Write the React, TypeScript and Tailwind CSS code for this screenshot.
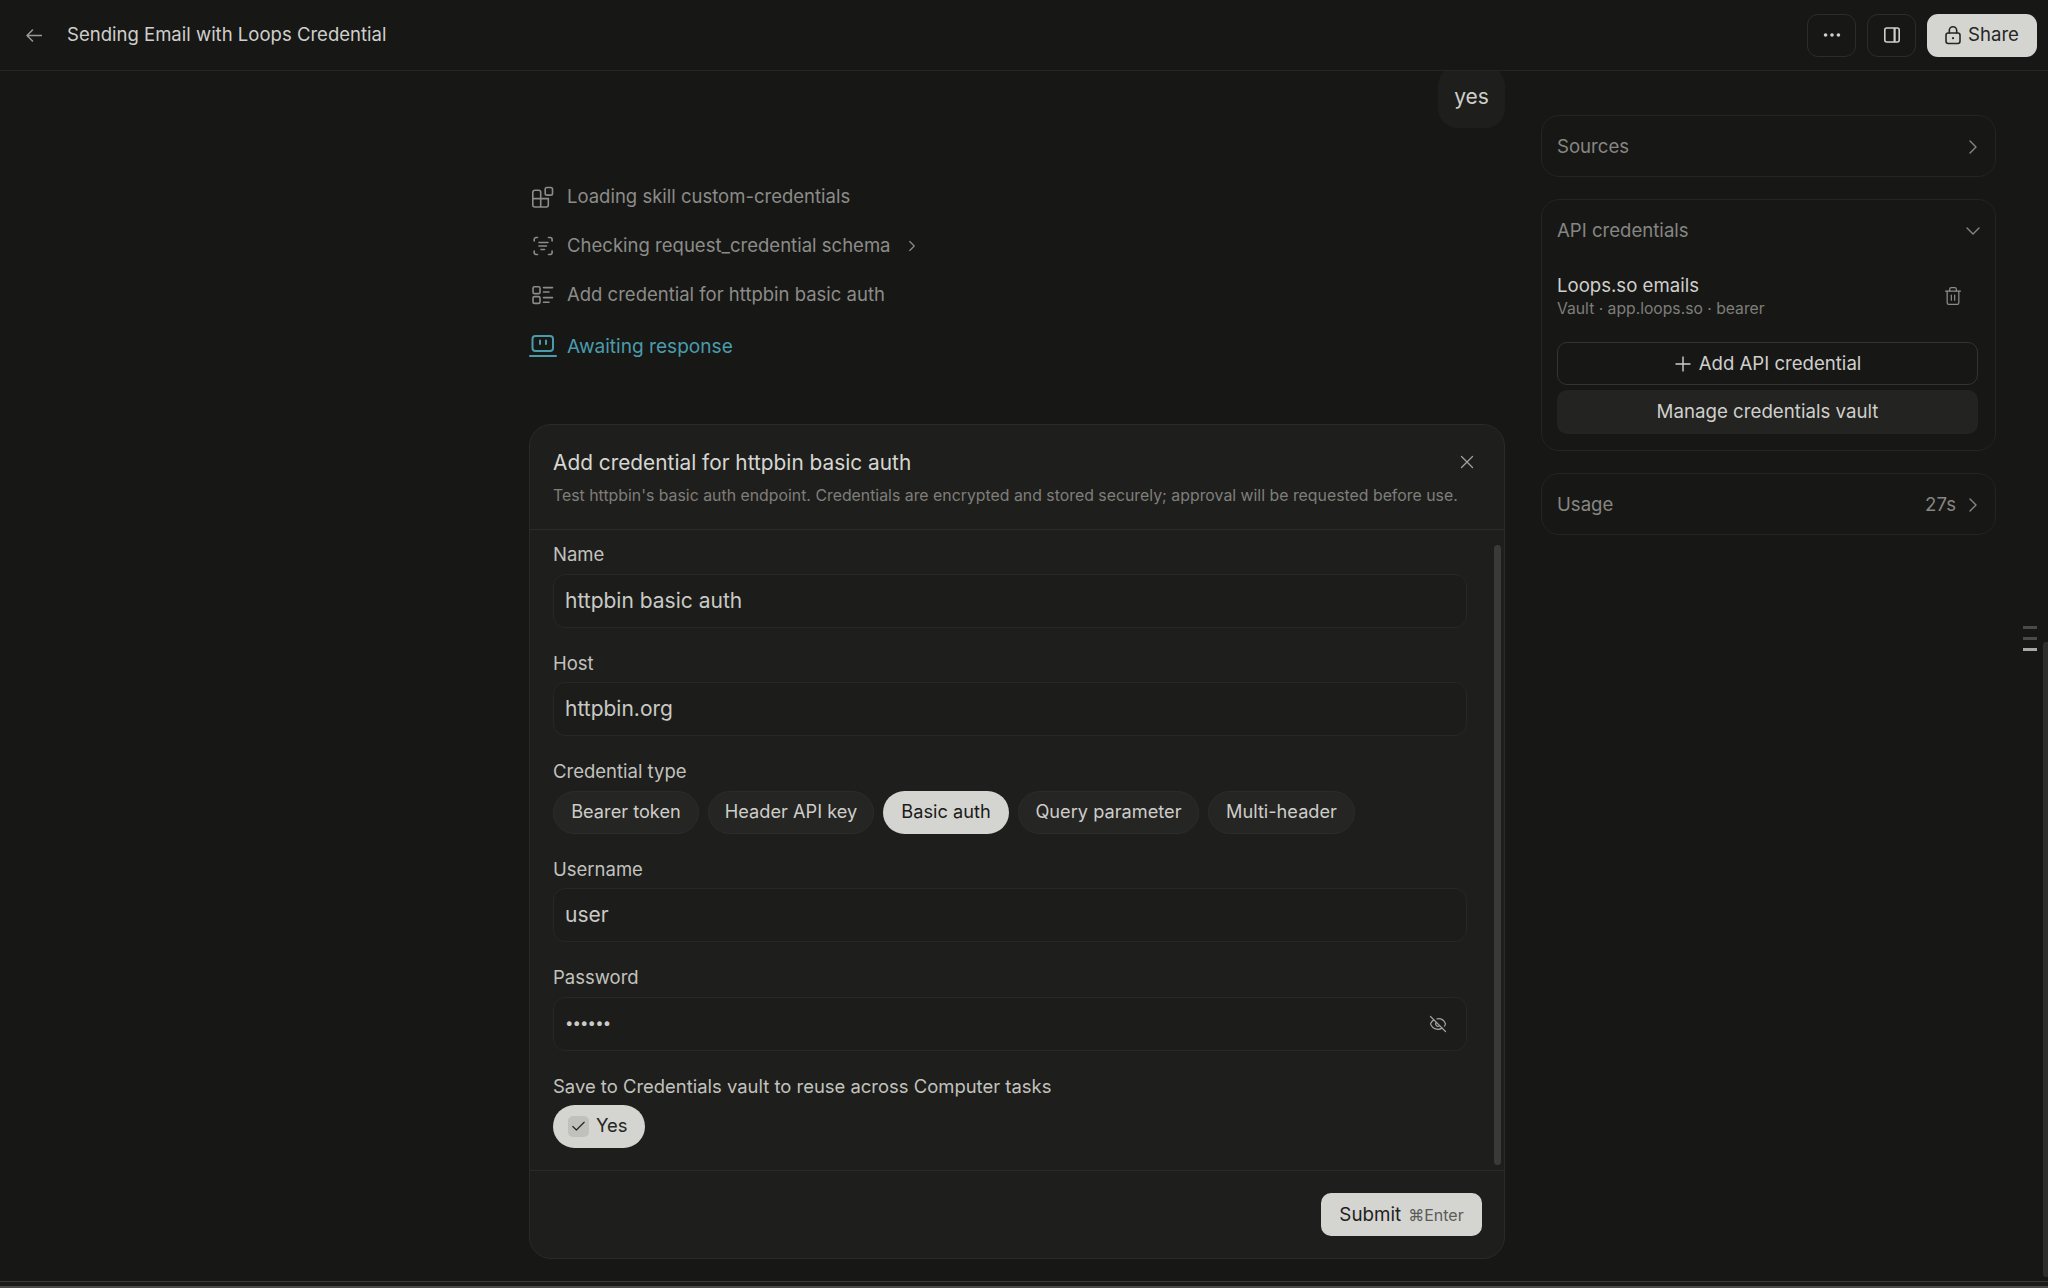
import React from "react";
import { ChevronRight, ChevronDown, Ellipsis, Trash2, Plus, X, EyeOff, Check } from "lucide-react";

const FONT = "font-['Inter','Liberation_Sans',sans-serif]";

function BackIcon() {
  return (
    <svg viewBox="0 0 16 13" className="w-[16px] h-[13px] text-[#9a9a96]" fill="none" stroke="currentColor" strokeWidth="1.5" strokeLinecap="round" strokeLinejoin="round">
      <path d="M6.5 1 1 6.5 6.5 12M1 6.5h14.5" />
    </svg>
  );
}
function LockIcon() {
  return (
    <svg viewBox="0 0 20 20" className="w-[20px] h-[20px]" fill="none" stroke="currentColor" strokeWidth="1.6" strokeLinecap="round">
      <rect x="3" y="8" width="14" height="10.5" rx="2.2" />
      <path d="M6.3 8V5.4a3.7 3.7 0 0 1 7.4 0V8" />
      <circle cx="10" cy="13.2" r="1.1" fill="currentColor" stroke="none" />
    </svg>
  );
}
function SkillIcon() {
  return (
    <svg viewBox="0 0 24 24" className="w-[24px] h-[24px]" fill="none" stroke="currentColor" strokeWidth="1.6">
      <path d="M1.8 7.3a2 2 0 0 1 2-2h3.9a2 2 0 0 1 2 2v6.3h7.6V20a2 2 0 0 1-2 2H3.8a2 2 0 0 1-2-2z" />
      <path d="M1.8 13.6h7.9M9.7 13.6V22" />
      <rect x="14.2" y="2.5" width="7.3" height="7.6" rx="1.7" />
    </svg>
  );
}
function ScanIcon() {
  return (
    <svg viewBox="0 0 24 24" className="w-[24px] h-[24px]" fill="none" stroke="currentColor" strokeWidth="1.6" strokeLinecap="round">
      <path d="M6.5 3.5H5.2a2 2 0 0 0-2 2V7M17.5 3.5h1.6a2 2 0 0 1 2 2V7M6.5 20.5H5.2a2 2 0 0 1-2-2V17M17.5 20.5h1.6a2 2 0 0 0 2-2V17" />
      <path d="M8 8.5h9M8 12h7.5M10 15.5h3.5" />
    </svg>
  );
}
function ListIcon() {
  return (
    <svg viewBox="0 0 24 24" className="w-[24px] h-[24px]" fill="none" stroke="currentColor" strokeWidth="1.6" strokeLinecap="round">
      <rect x="2" y="3.8" width="7" height="6.8" rx="1.4" />
      <rect x="2" y="13.6" width="7" height="6.8" rx="1.4" />
      <path d="M12.5 4.6h9M12.5 9h5.5M12.5 14.6h9M12.5 19.2h5.5" />
    </svg>
  );
}
function AwaitIcon() {
  return (
    <svg viewBox="0 0 28 24" className="w-[28px] h-[24px]" fill="none" stroke="currentColor" strokeWidth="2" strokeLinecap="round">
      <rect x="3.5" y="2" width="20.5" height="15" rx="3" />
      <path d="M1 22h26" />
      <path d="M11 6.5v3.5M17 6.5v3.5" />
    </svg>
  );
}
function PanelIcon() {
  return (
    <svg viewBox="0 0 20 20" className="w-[20px] h-[20px]" fill="none" stroke="currentColor" strokeWidth="1.6">
      <rect x="2.8" y="3" width="14.4" height="14" rx="2" />
      <path d="M12.6 3v14" strokeWidth="2.2" />
    </svg>
  );
}

function Step({ icon, label, size, chevron, teal }: { icon: React.ReactNode; label: string; size: string; chevron?: boolean; teal?: boolean }) {
  return (
    <div className={`flex items-center h-[24px] ${teal ? "text-[#4b9cab]" : "text-[#8c8c88]"}`}>
      <div className={teal ? "w-[38px] flex" : "w-[36px] flex"}>{icon}</div>
      <span className={size}>{label}</span>
      {chevron && <ChevronRight className="ml-[12px] w-[18px] h-[18px]" strokeWidth={1.6} />}
    </div>
  );
}

function Field({ label, value, dots, children }: { label: string; value: string; dots?: boolean; children?: React.ReactNode }) {
  return (
    <div className="flex flex-col">
      <div className="text-[18.5px] leading-[24px] text-[#c2c2be]">{label}</div>
      <div className="mt-[7.5px] h-[54px] rounded-[12px] border border-[#272725] bg-[#1c1c1a] flex items-center pl-[11px] pr-[19px] justify-between">
        <span className={dots ? "text-[15px] tracking-[-0.9px] text-[#c9c9c5]" : "text-[21px] text-[#c9c9c5]"}>{value}</span>
        {children}
      </div>
    </div>
  );
}

function Pill({ label, width, active }: { label: string; width: string; active?: boolean }) {
  return (
    <div className={`${width} h-[43px] rounded-full flex items-center justify-center text-[18.2px] ${active ? "bg-[#d4d4d1] text-[#1b1b19]" : "bg-[#252523] border border-[#2c2c2a] text-[#cdcdc9]"}`}>
      {label}
    </div>
  );
}

function SideCard({ children }: { children: React.ReactNode }) {
  return <div className="rounded-[18px] border border-[#242422] pl-[15px] pr-[17px]">{children}</div>;
}

export default function App() {
  return (
    <div className={`${FONT} relative w-[2048px] h-[1288px] overflow-hidden bg-[#171716] flex flex-col`}>
      <header className="relative z-10 h-[71px] shrink-0 bg-[#171716] border-b border-[#262624] flex items-center pl-[26px] pr-[11px]">
        <BackIcon />
        <div className="ml-[25px] text-[18.55px] text-[#cfcfcb]">Sending Email with Loops Credential</div>
        <div className="ml-auto flex items-center gap-[11px]">
          <button className="w-[49px] h-[43px] rounded-[11px] border border-[#2c2c2a] flex items-center justify-center text-[#cfcfcb]">
            <Ellipsis className="w-[22px] h-[22px]" />
          </button>
          <button className="w-[49px] h-[43px] rounded-[11px] border border-[#2c2c2a] flex items-center justify-center text-[#cfcfcb]">
            <PanelIcon />
          </button>
          <button className="w-[110px] h-[43px] rounded-[11px] bg-[#d4d4d1] flex items-center justify-center gap-[5px] pr-[2px] text-[#262624] text-[18.6px]">
            <LockIcon />
            Share
          </button>
        </div>
      </header>

      <div className="flex-1 flex min-h-0 pl-[529px]">
        <main className="w-[976px] flex flex-col shrink-0">
          <div className="self-end -mt-[5px] h-[62px] w-[67px] bg-[#1e1e1c] rounded-[20px] flex items-center justify-center text-[21px] text-[#cfcfcb]">
            yes
          </div>
          <div className="mt-[57px] flex flex-col gap-[25px] pl-[2px]">
            <Step icon={<SkillIcon />} size="text-[18.5px]" label="Loading skill custom-credentials" />
            <Step icon={<ScanIcon />} size="text-[18.55px]" label="Checking request_credential schema" chevron />
            <Step icon={<ListIcon />} size="text-[18.5px]" label="Add credential for httpbin basic auth" />
            <div className="-ml-[2px] mt-[2px]">
              <Step icon={<AwaitIcon />} size="text-[19.1px]" teal label="Awaiting response" />
            </div>
          </div>

          <section className="mt-[66px] h-[835px] rounded-[22px] border border-[#2a2a28] bg-[#1e1e1c] flex flex-col relative overflow-hidden">
            <div className="h-[105px] shrink-0 border-b border-[#2a2a28] pl-[23px] pr-[26px] pt-[23px]">
              <div className="h-[30px] flex items-center justify-between">
                <div className="text-[20.85px] leading-[30px] text-[#d6d6d2]">Add credential for httpbin basic auth</div>
                <X className="w-[22px] h-[22px] -mt-[2px] text-[#a2a29e]" strokeWidth={1.4} />
              </div>
              <div className="mt-[7px] text-[15.85px] leading-[22px] text-[#7e7e7a]">
                Test httpbin's basic auth endpoint. Credentials are encrypted and stored securely; approval will be requested before use.
              </div>
            </div>

            <div className="flex-1 pl-[23px] pr-[37px] pt-[12px] flex flex-col min-h-0">
              <div className="flex flex-col gap-[23px]">
                <Field label="Name" value="httpbin basic auth" />
                <Field label="Host" value="httpbin.org" />
                <div>
                  <div className="text-[18.5px] leading-[24px] text-[#c2c2be]">Credential type</div>
                  <div className="mt-[7.5px] flex gap-[9px]">
                    <Pill width="w-[146px]" label="Bearer token" />
                    <Pill width="w-[166px]" label="Header API key" />
                    <Pill width="w-[126px]" label="Basic auth" active />
                    <Pill width="w-[181px]" label="Query parameter" />
                    <Pill width="w-[147px]" label="Multi-header" />
                  </div>
                </div>
                <Field label="Username" value="user" />
                <Field label="Password" value="••••••" dots>
                  <EyeOff className="w-[18px] h-[18px] text-[#a2a29e]" strokeWidth={1.6} />
                </Field>
                <div>
                  <div className="text-[18.45px] leading-[24px] text-[#c2c2be]">Save to Credentials vault to reuse across Computer tasks</div>
                  <div className="mt-[7px] w-[92px] h-[43px] rounded-full bg-[#d4d4d1] flex items-center pl-[15px] gap-[7px] text-[18.4px] text-[#262624]">
                    <span className="w-[21px] h-[21px] rounded-[5px] bg-[#c0c0bd] flex items-center justify-center">
                      <Check className="w-[17px] h-[17px]" strokeWidth={1.7} />
                    </span>
                    Yes
                  </div>
                </div>
              </div>
            </div>

            <div className="h-[88px] shrink-0 border-t border-[#2a2a28] flex items-center justify-end pr-[22px]">
              <button className="w-[161px] h-[43px] rounded-[10px] bg-[#d4d4d1] flex items-center justify-center gap-[7px] pt-[1px] text-[#1f1f1d] text-[18.8px]">
                Submit
                <span className="text-[16px] text-[#5b5b58]">⌘Enter</span>
              </button>
            </div>

            {/* scrollbar */}
            <div className="absolute right-[3px] top-[120px] bottom-[93px] w-[7px] rounded-full bg-[#3a3a38]" />
          </section>
        </main>

        <aside className="w-[455px] ml-[36px] pt-[44px] flex flex-col gap-[22px] shrink-0">
          <SideCard>
            <div className="h-[60px] pt-[2px] flex items-center justify-between text-[18.6px] text-[#868682]">
              Sources
              <ChevronRight className="w-[24px] h-[24px] -mr-[7px]" strokeWidth={1.4} />
            </div>
          </SideCard>
          <SideCard>
            <div className="h-[62px] flex items-center justify-between text-[18.6px] text-[#868682]">
              API credentials
              <ChevronDown className="w-[24px] h-[24px] -mr-[7px]" strokeWidth={1.4} />
            </div>
            <div className="mt-[11px] flex items-center justify-between pr-[15px]">
              <div>
                <div className="text-[18.6px] leading-[24px] text-[#cfcfcb]">Loops.so emails</div>
                <div className="mt-[1px] text-[15.7px] leading-[22px] text-[#7e7e7a]">Vault · app.loops.so · bearer</div>
              </div>
              <Trash2 className="w-[20px] h-[20px] -mt-[1px] text-[#8c8c88]" strokeWidth={1.5} />
            </div>
            <div className="mt-[22px] h-[43px] rounded-[10px] border border-[#333331] pr-[3px] flex items-center justify-center gap-[4px] text-[18.6px] text-[#cfcfcb]">
              <Plus className="w-[24px] h-[24px]" strokeWidth={1.4} />
              Add API credential
            </div>
            <div className="mt-[5px] mb-[16px] h-[44px] rounded-[10px] bg-[#232321] flex items-center justify-center text-[18.7px] text-[#cfcfcb]">
              Manage credentials vault
            </div>
          </SideCard>
          <SideCard>
            <div className="h-[60px] pt-[2px] flex items-center justify-between text-[18.6px] text-[#868682]">
              Usage
              <div className="flex items-center gap-[5px] -mr-[7px]">
                27s
                <ChevronRight className="w-[24px] h-[24px]" strokeWidth={1.4} />
              </div>
            </div>
          </SideCard>
        </aside>
      </div>

      <div className="h-[7px] shrink-0 border-t border-[#3a3a38] border-b-2 border-b-[#4a4a48] bg-[#1b1b19]" />

      {/* minimap marks */}
      <div className="absolute left-[2023px] top-[626px] flex flex-col gap-[8px]">
        <div className="w-[14px] h-[3px] bg-[#4a4a48]" />
        <div className="w-[14px] h-[3px] bg-[#4a4a48]" />
        <div className="w-[14px] h-[3px] bg-[#a8a8a4]" />
      </div>
      <div className="absolute right-0 top-[642px] bottom-[11px] w-[5px] rounded-l-[3px] bg-[#2e2e2c]" />
    </div>
  );
}
